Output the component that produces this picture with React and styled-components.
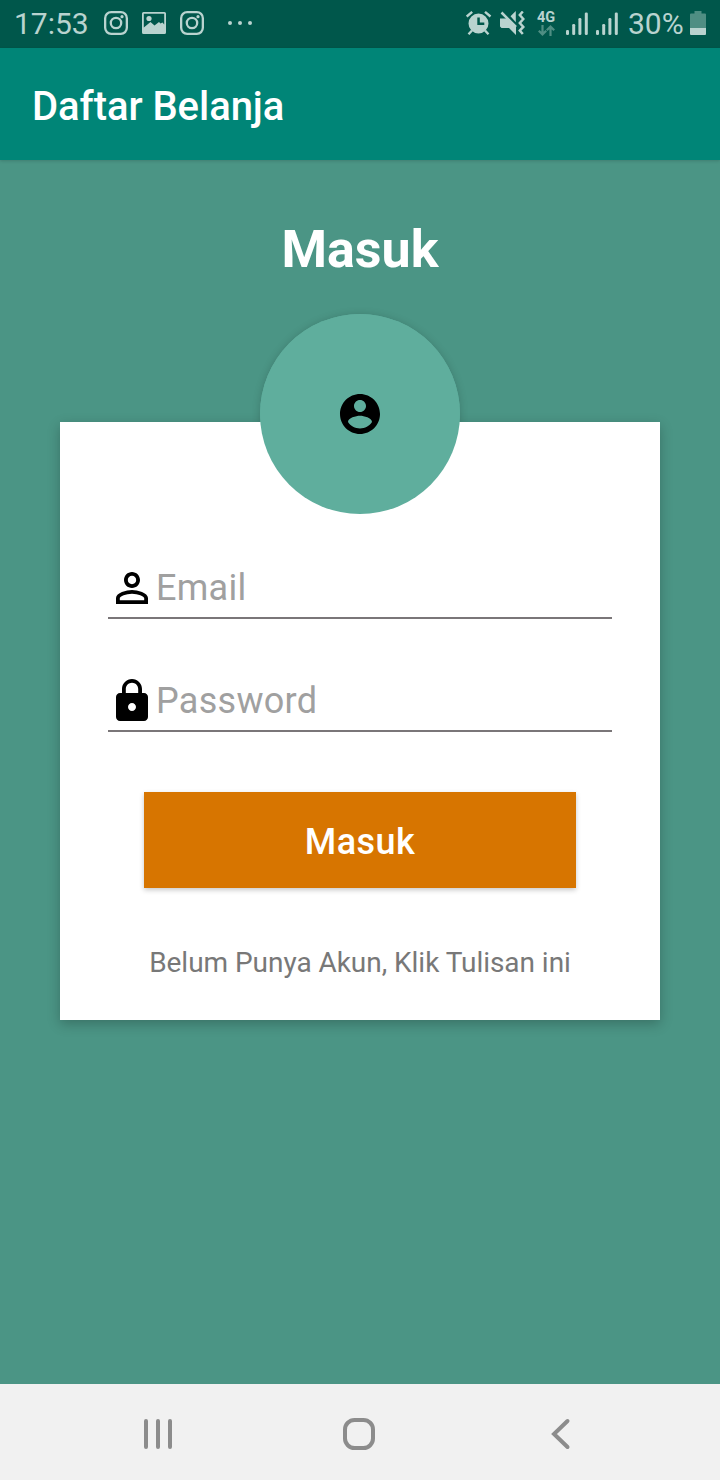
import React from "react";
import styled, { createGlobalStyle } from "styled-components";

const GlobalStyle = createGlobalStyle`
  * { box-sizing: border-box; }
  body { margin: 0; font-family: Roboto, "Noto Sans", sans-serif; }
`;

const Screen = styled.div`
  display: flex;
  flex-direction: column;
  width: 720px;
  height: 1480px;
  background: #4b9585;
  overflow: hidden;
`;

const StatusBar = styled.header`
  display: flex;
  justify-content: space-between;
  height: 48px;
  padding: 0 14px;
  background: #00574b;
  color: #b9d3cf;
`;

const StatusGroup = styled.div`
  display: flex;
  align-items: center;
  height: 46px;
`;

const StatusText = styled.span`
  width: ${(p) => p.$width}px;
  margin-right: ${(p) => p.$gap || 0}px;
  font-size: 30px;
  line-height: 46px;
  white-space: nowrap;
  padding-top: 2px;
`;

const StatusIcon = styled.svg`
  flex: none;
  display: block;
  width: ${(p) => p.$width || 24}px;
  height: 24px;
  margin-right: ${(p) => p.$gap || 0}px;
  fill: currentColor;
`;

const Network = styled.div`
  display: flex;
  flex-direction: column;
  align-items: center;
  gap: 1px;
  width: 20px;
  height: 24px;
  margin-right: 10px;
  font-size: 14.5px;
  line-height: 13px;
  font-weight: 700;
`;

const NetworkArrows = styled.svg`
  flex: none;
  width: 17px;
  height: 11px;
  fill: none;
  stroke: #4f8e83;
  stroke-width: 2.2;
`;

const AppBar = styled.div`
  position: relative;
  display: flex;
  align-items: center;
  height: 112px;
  padding: 4px 32px 0;
  background: #008577;
  box-shadow: 0 1px 3px rgba(0, 0, 0, 0.16);
  color: #fff;
  font-size: 40px;
  font-weight: 500;
  letter-spacing: -0.05px;
`;

const Content = styled.main`
  flex: 1;
  display: flex;
  flex-direction: column;
  align-items: center;
`;

const Heading = styled.h1`
  margin: 55px 0 29px;
  color: #fff;
  font-size: 52px;
  line-height: 70px;
  font-weight: 700;
`;

const Avatar = styled.div`
  z-index: 1;
  display: flex;
  align-items: center;
  justify-content: center;
  width: 200px;
  height: 200px;
  margin-bottom: -92px;
  border-radius: 50%;
  background: #5fae9d;
`;

const AvatarShadow = styled(Avatar)`
  box-shadow: 0 1px 9px rgba(0, 0, 0, 0.18);
  z-index: 0;
  margin-bottom: -200px;
`;

const Glyph = styled.svg`
  flex: none;
  width: 48px;
  height: 48px;
  fill: #000;
`;

const Card = styled.form`
  position: relative;
  display: flex;
  flex-direction: column;
  align-items: center;
  width: 600px;
  height: 598px;
  padding: 139px 48px 0;
  background: #fff;
  box-shadow: 0 4px 12px rgba(0, 0, 0, 0.24);
`;

const Field = styled.label`
  display: flex;
  align-items: center;
  width: 100%;
  height: 58px;
  margin-bottom: 55px;
  padding-bottom: 2px;
  border-bottom: 2px solid #7a7678;
`;

const Input = styled.input`
  width: 450px;
  padding: 0;
  border: 0;
  outline: 0;
  background: transparent;
  font: 400 36px/46px Roboto, "Noto Sans", sans-serif;
  letter-spacing: 0.28px;
  &::placeholder { color: #a0a0a0; opacity: 1; }
`;

const SubmitButton = styled.button`
  width: 432px;
  height: 96px;
  margin: 5px 0 53px;
  padding: 4px 0 0;
  border: 0;
  background: #d77500;
  box-shadow: 0 2px 5px rgba(0, 0, 0, 0.22);
  color: #fff;
  font: 500 36px Roboto, "Noto Sans", sans-serif;
  letter-spacing: 0.45px;
`;

const SignUp = styled.p`
  margin: 0;
  color: #787878;
  font-size: 28px;
  line-height: 44px;
  letter-spacing: -0.04px;
  white-space: nowrap;
`;

const NavBar = styled.nav`
  display: flex;
  align-items: center;
  justify-content: space-between;
  height: 96px;
  padding: 4px 148px 0 142px;
  background: #f1f1f1;
`;

const NavIcon = styled.svg`
  width: ${(p) => p.$width}px;
  height: 34px;
  margin-right: ${(p) => p.$gap || 0}px;
  fill: none;
  stroke: #8c8c8c;
  stroke-width: 4;
  stroke-linecap: round;
`;

const CameraIcon = ({ gap }) => (
  <StatusIcon viewBox="0 0 24 24" $gap={gap}>
    <g fill="none" stroke="currentColor" strokeWidth="2.3">
      <rect x="1.15" y="1.15" width="21.7" height="21.7" rx="6" />
      <circle cx="12" cy="12" r="5.2" />
    </g>
    <circle cx="18" cy="5.7" r="1.6" />
  </StatusIcon>
);

const SignalIcon = ({ gap }) => (
  <StatusIcon viewBox="0 0 22 24" $width={22} $gap={gap}>
    <rect x="0" y="19" width="3" height="5" rx="1.3" />
    <rect x="6.2" y="13" width="3" height="11" rx="1.3" />
    <rect x="12.4" y="7" width="3" height="17" rx="1.3" />
    <rect x="18.8" y="1.5" width="3" height="22.5" rx="1.3" />
  </StatusIcon>
);

export default function App() {
  return (
    <>
      <GlobalStyle />
      <Screen>
        <StatusBar>
          <StatusGroup>
            <StatusText $width={74} $gap={16}>17:53</StatusText>
            <CameraIcon gap={14} />
            <StatusIcon viewBox="0 0 24 24" $gap={14}>
              <path
                fillRule="evenodd"
                d="M1.5 1h21a1.5 1.5 0 0 1 1.5 1.5v19a1.5 1.5 0 0 1-1.5 1.5h-21A1.5 1.5 0 0 1 0 21.5v-19A1.5 1.5 0 0 1 1.5 1zM1.8 2.8v13.7l6.7-5.5 4 3.5 4.500-3.500 1.500 1.500 2-1 1.700 2V2.800z"
              />
              <circle cx="7" cy="7.5" r="2.6" />
            </StatusIcon>
            <CameraIcon gap={24} />
            <StatusIcon viewBox="0 0 24 24">
              <circle cx="2" cy="12" r="2" />
              <circle cx="12" cy="12" r="2" />
              <circle cx="22" cy="12" r="2" />
            </StatusIcon>
          </StatusGroup>
          <StatusGroup>
            <StatusIcon viewBox="0 0 26 24" $width={26} $gap={8}>
              <path
                fillRule="evenodd"
                d="M12.500 2.500a10 10 0 1 1 0 20 10 10 0 0 1 0-20zM11.300 6.500v7.500h7v-2.400h-4.500V6.500z"
              />
              <path
                fill="none"
                stroke="currentColor"
                strokeWidth="2.4"
                d="M.7 5.500 6.200.9M24.500 5.500 19 .9M6 19.500l-3.500 3.700M19 19.500l3.500 3.700"
              />
            </StatusIcon>
            <StatusIcon viewBox="0 0 25 24" $width={25} $gap={11}>
              <path d="M0 7.500h7l9 8.500v8l-7-7H1.500L0 15.500zM10.500 5.300 15.800 0v11.200z" />
              <path
                fill="none"
                stroke="currentColor"
                strokeWidth="2.5"
                d="M1.500 1.500 16 16M22.800.5l-3 3.500 3.500 4-3.500 4 3.500 4-3.500 3.500 3 3.500"
              />
            </StatusIcon>
            <Network>
              4G
              <NetworkArrows viewBox="0 0 17 11">
                <path d="M4.5 0v9.500M.8 5.700l3.700 3.700 3.700-3.700M12.500 11V1.500M8.800 5.300l3.700-3.700 3.700 3.700" />
              </NetworkArrows>
            </Network>
            <SignalIcon gap={8} />
            <SignalIcon gap={10} />
            <StatusText $width={56} $gap={6}>30%</StatusText>
            <StatusIcon viewBox="0 0 16 24" $width={16}>
              <path fill="#4f8e83" d="M4.5 0h7v2.500H15a1 1 0 0 1 1 1V17H0V3.500a1 1 0 0 1 1-1h3.500z" />
              <path d="M0 17h16v6a1 1 0 0 1-1 1H1a1 1 0 0 1-1-1z" />
            </StatusIcon>
          </StatusGroup>
        </StatusBar>
        <AppBar>Daftar Belanja</AppBar>
        <Content>
          <Heading>Masuk</Heading>
          <AvatarShadow />
          <Avatar>
            <Glyph viewBox="0 0 24 24">
              <path d="M12 2C6.48 2 2 6.48 2 12s4.48 10 10 10 10-4.48 10-10S17.52 2 12 2zm0 3c1.66 0 3 1.34 3 3s-1.34 3-3 3-3-1.34-3-3 1.34-3 3-3zm0 14.2c-2.5 0-4.71-1.28-6-3.22.03-1.99 4-3.08 6-3.08 1.99 0 5.97 1.09 6 3.08-1.29 1.94-3.5 3.22-6 3.22z" />
            </Glyph>
          </Avatar>
          <Card>
            <Field>
              <Glyph viewBox="0 0 24 24">
                <path d="M12 5.9c1.16 0 2.1.94 2.1 2.1s-.94 2.1-2.1 2.1S9.9 9.16 9.9 8s.94-2.1 2.1-2.1m0 9c2.97 0 6.1 1.46 6.1 2.1v1.1H5.9V17c0-.64 3.13-2.1 6.1-2.1M12 4C9.79 4 8 5.79 8 8s1.79 4 4 4 4-1.79 4-4-1.79-4-4-4zm0 9c-2.67 0-8 1.34-8 4v3h16v-3c0-2.66-5.33-4-8-4z" />
              </Glyph>
              <Input type="email" placeholder="Email" />
            </Field>
            <Field>
              <Glyph viewBox="0 0 24 24">
                <path d="M18 8h-1V6c0-2.76-2.24-5-5-5S7 3.24 7 6v2H6c-1.1 0-2 .9-2 2v10c0 1.1.9 2 2 2h12c1.1 0 2-.9 2-2V10c0-1.1-.9-2-2-2zm-6 9c-1.1 0-2-.9-2-2s.9-2 2-2 2 .9 2 2-.9 2-2 2zm3.1-9H8.9V6c0-1.71 1.39-3.1 3.1-3.1 1.71 0 3.1 1.39 3.1 3.1v2z" />
              </Glyph>
              <Input type="password" placeholder="Password" />
            </Field>
            <SubmitButton type="button">Masuk</SubmitButton>
            <SignUp>Belum Punya Akun, Klik Tulisan ini</SignUp>
          </Card>
        </Content>
        <NavBar>
          <NavIcon viewBox="0 0 32 34" $width={32}>
            <path d="M4 4v26M16 4v26M28 4v26" />
          </NavIcon>
          <NavIcon viewBox="0 0 34 34" $width={34} $gap={6}>
            <rect x="3" y="3" width="28" height="28" rx="9.5" />
          </NavIcon>
          <NavIcon viewBox="0 0 22 34" $width={22}>
            <path d="M17.5 4 4 17l13.5 13" />
          </NavIcon>
        </NavBar>
      </Screen>
    </>
  );
}
